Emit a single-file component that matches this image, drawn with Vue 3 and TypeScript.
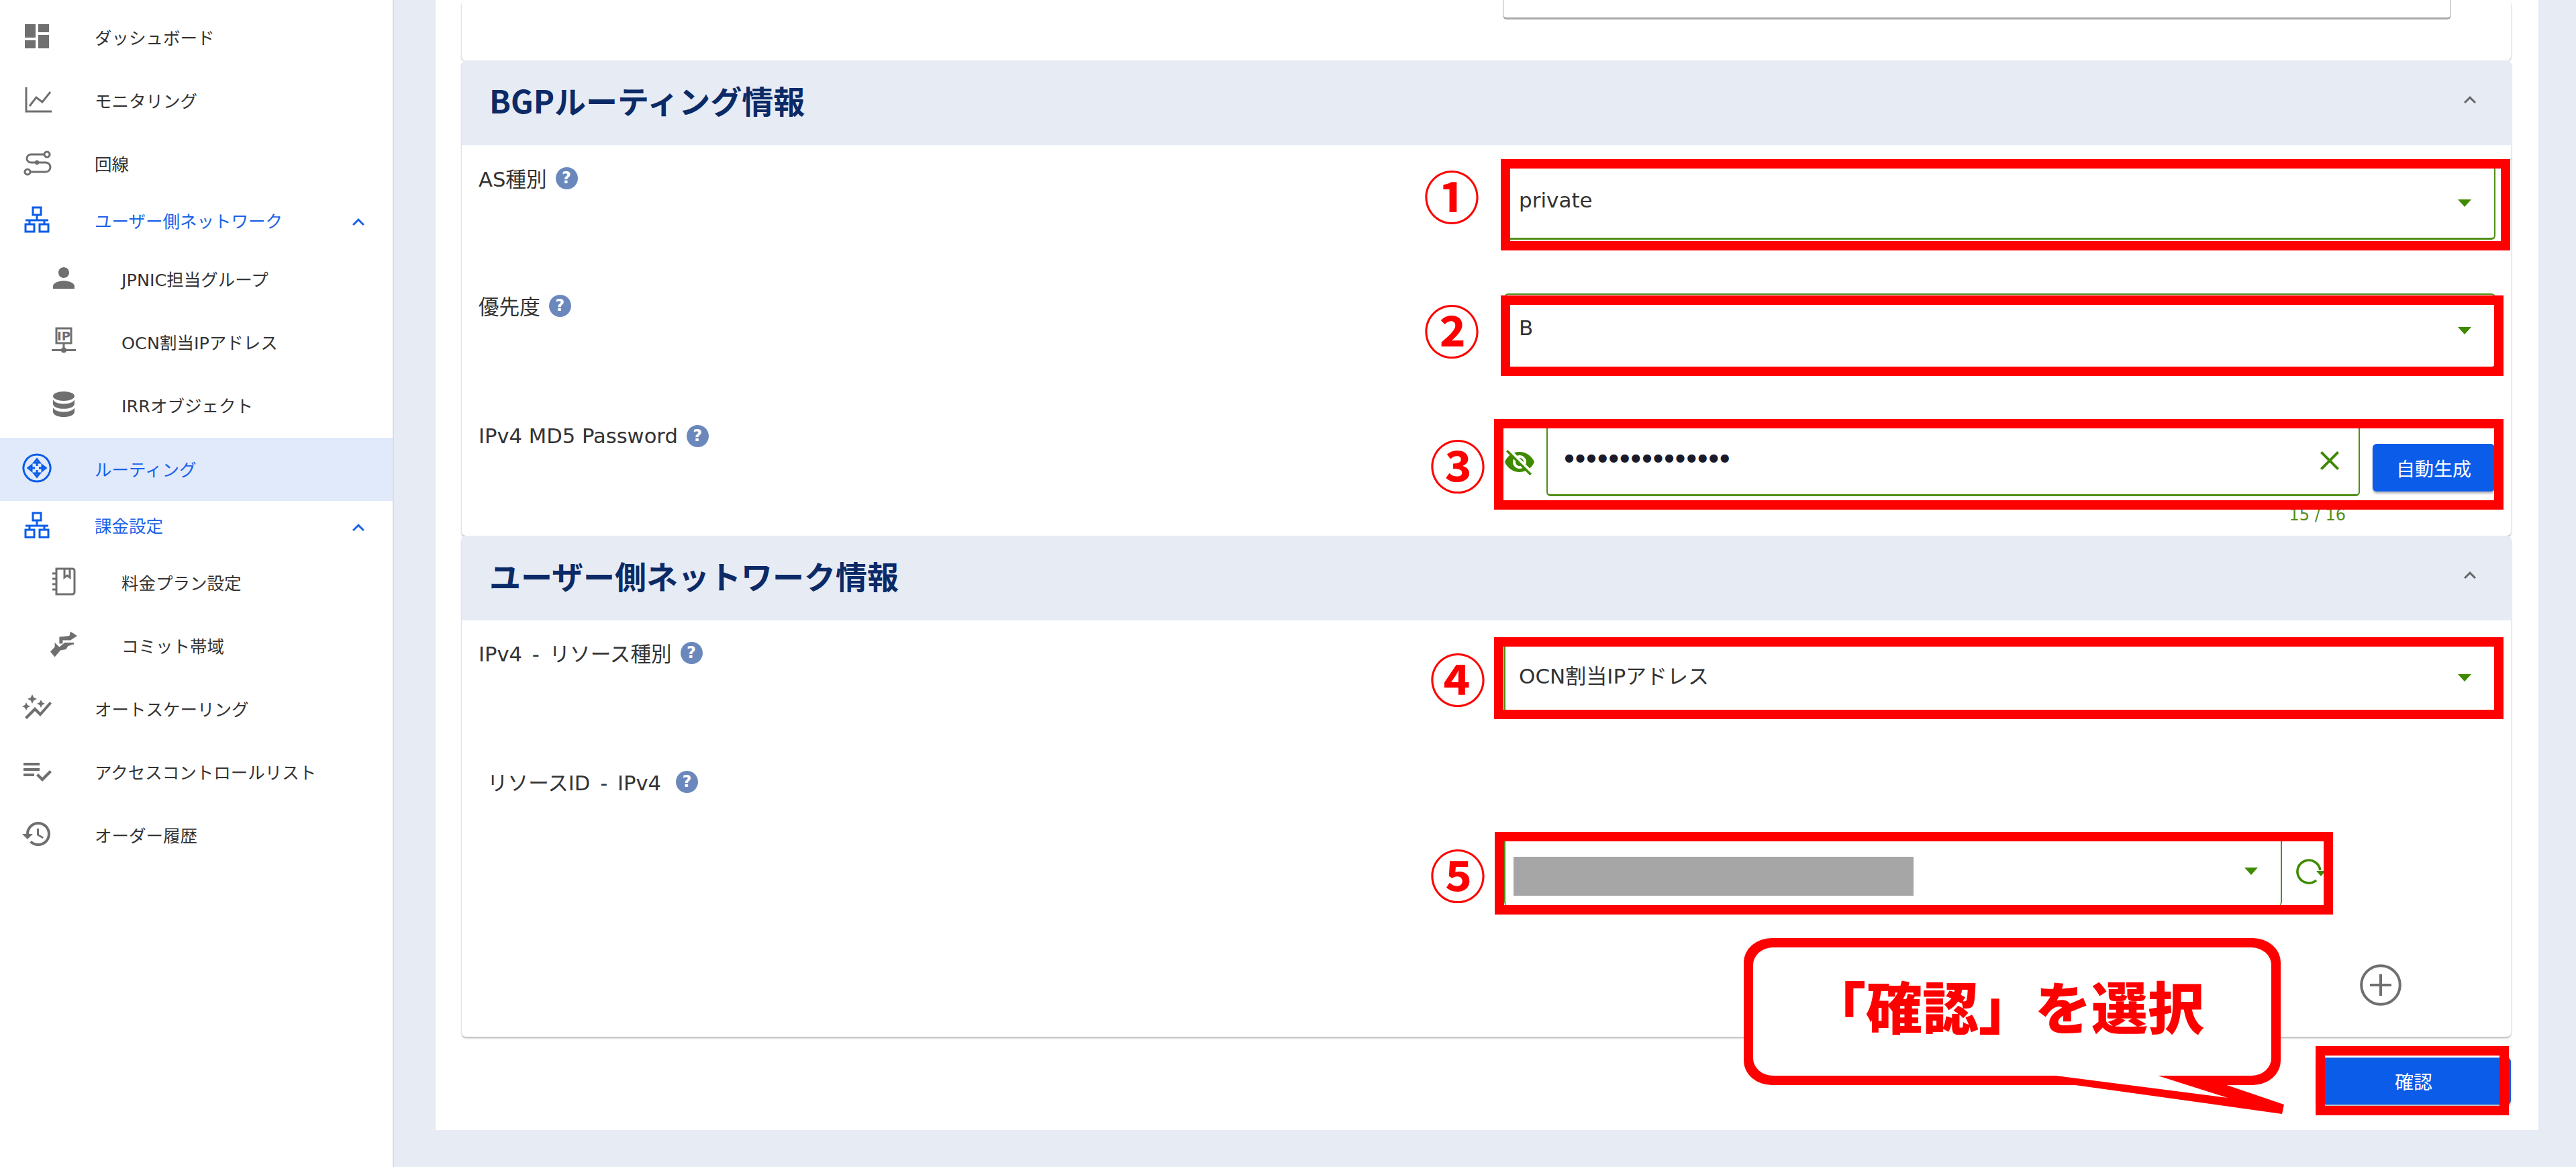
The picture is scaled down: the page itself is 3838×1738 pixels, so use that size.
<script setup lang="ts">
interface NavItem {
  label: string
  icon: string
  sub?: boolean
  group?: boolean
  active?: boolean
  blue?: boolean
}

const icons: Record<string, { d: string; line?: boolean }> = {
  dashboard: { d: 'M3 13h8V3H3v10zm0 8h8v-6H3v6zm10 0h8V11h-8v10zm0-18v6h8V3h-8z' },
  chart: { d: 'M4 3v18h19M6.500 17l5-6.500 4.500 3.500 6-7.500', line: true },
  route: {
    d: 'M17.500 6H7.500a3 3 0 0 0 0 6H18.500a3.500 3.500 0 0 1 0 7H7.200M19.500 4a2 2 0 1 0 .01 0zM5 17a2 2 0 1 0 .01 0zM12 11a1 1 0 1 0 .01 0z',
    line: true
  },
  network: {
    d: 'M9 3h6v5.500H9zM3.500 15.500h6.500V21H3.500zM14 15.500h6.500V21H14zM12 8.500v4M3.500 12.500h17M6.500 12.500v3M17.500 12.500v3',
    line: true
  },
  person: { d: 'M12 12c2.210 0 4-1.790 4-4s-1.790-4-4-4-4 1.790-4 4 1.790 4 4 4zm0 2c-2.670 0-8 1.340-8 4v2h16v-2c0-2.660-5.330-4-8-4z' },
  router: {
    d: 'M12 2a10 10 0 1 0 .01 0zM12 5.500l-2 2.500h4zM12 8v2.500M12 18.500l-2-2.500h4zM12 16v-2.500M5.500 12l2.500-2v4zM8 12h2.500M18.500 12l-2.500-2v4zM16 12h-2.500',
    line: true
  },
  notebook: {
    d: 'M6.500 2.500h12a1.500 1.500 0 0 1 1.500 1.500v16a1.500 1.500 0 0 1-1.500 1.500h-12zM3.500 6H6M3.500 10H6M3.500 14H6M3.500 18H6M12.500 3v6l2-1.500 2 1.500V3',
    line: true
  },
  commit: {
    d: 'M8.700 11.300V6.300l7.500-.8.800-3.300 5 3.300-5 3.300h-5.800v2.500zM2 17.200l3.300-3.400v-3.300l3.400 3.300 4.100-3.300h6.700v1.300l-4.200 1.200-1.600 2.500-4.200.8-4.200 5z'
  },
  autograph: {
    d: 'M14.060 9.940L12 9l2.060-.940L15 6l.940 2.060L18 9l-2.060.940L15 12l-.940-2.060zM4 14l.940-2.060L7 11l-2.060-.940L4 8l-.940 2.060L1 11l2.060.940L4 14zm4.500-5l1.090-2.410L12 5.500 9.590 4.410 8.500 2 7.410 4.410 5 5.500l2.410 1.090L8.500 9zm-4 11.500l6-6.010 4 4L23 8.930l-1.410-1.410-7.090 7.970-4-4L3 19l1.500 1.500z'
  },
  checklist: { d: 'M14 10H2v2h12v-2zm0-4H2v2h12V6zM2 16h8v-2H2v2zm19.500-4.500L23 13l-6.990 7-4.510-4.500L13 14l3.010 3 5.490-5.500z' },
  history: {
    d: 'M13 3c-4.970 0-9 4.030-9 9H1l3.890 3.890.070.140L9 12H6c0-3.870 3.130-7 7-7s7 3.130 7 7-3.130 7-7 7c-1.930 0-3.680-.790-4.940-2.060l-1.420 1.420C8.270 19.990 10.510 21 13 21c4.970 0 9-4.030 9-9s-4.030-9-9-9zm-1 5v5l4.280 2.540.720-1.210-3.500-2.080V8H12z'
  }
}

const navItems: NavItem[] = [
  { label: 'ダッシュボード', icon: 'dashboard' },
  { label: 'モニタリング', icon: 'chart' },
  { label: '回線', icon: 'route' },
  { label: 'ユーザー側ネットワーク', icon: 'network', group: true, blue: true },
  { label: 'JPNIC担当グループ', icon: 'person', sub: true },
  { label: 'OCN割当IPアドレス', icon: 'ip', sub: true },
  { label: 'IRRオブジェクト', icon: 'database', sub: true },
  { label: 'ルーティング', icon: 'router', active: true, blue: true },
  { label: '課金設定', icon: 'network', group: true, blue: true },
  { label: '料金プラン設定', icon: 'notebook', sub: true },
  { label: 'コミット帯域', icon: 'commit', sub: true },
  { label: 'オートスケーリング', icon: 'autograph' },
  { label: 'アクセスコントロールリスト', icon: 'checklist' },
  { label: 'オーダー履歴', icon: 'history' }
]

const chevron = 'M7.410 15.410L12 10.830l4.590 4.580L18 14l-6-6-6 6z'
const markers = ['①', '②', '③', '④', '⑤']
</script>

<template>
  <div class="page">
    <aside class="sidebar">
      <div
        v-for="item in navItems"
        :key="item.label"
        class="nav-item"
        :class="{ sub: item.sub, group: item.group, active: item.active, blue: item.blue }"
      >
        <svg v-if="item.icon === 'ip'" class="nav-icon" viewBox="0 0 24 24">
          <path d="M6.500 2.500h11v11h-11z" fill="none" stroke="currentColor" stroke-width="1.500" />
          <text x="12" y="11.500" text-anchor="middle" class="ip-text">IP</text>
          <path d="M12 13.500v4M3 18.800h18" fill="none" stroke="currentColor" stroke-width="1.500" />
          <circle cx="12" cy="18.800" r="2" fill="currentColor" />
        </svg>
        <svg v-else-if="item.icon === 'database'" class="nav-icon" viewBox="0 0 24 24">
          <ellipse cx="12" cy="6" rx="8" ry="3.500" fill="currentColor" />
          <path d="M4 8.500c1 2.200 4 3.200 8 3.200s7-1 8-3.200v3.500c-.5 2.300-4 3.400-8 3.400s-7.500-1.100-8-3.400z" fill="currentColor" />
          <path d="M4 14.500c1 2.200 4 3.200 8 3.200s7-1 8-3.200V18c-.5 2.300-4 3.500-8 3.500S4.500 20.300 4 18z" fill="currentColor" />
        </svg>
        <svg v-else class="nav-icon" viewBox="0 0 24 24">
          <path
            :d="icons[item.icon].d"
            :fill="icons[item.icon].line ? 'none' : 'currentColor'"
            :stroke="icons[item.icon].line ? 'currentColor' : 'none'"
            stroke-width="1.500"
          />
        </svg>
        <span class="nav-label">{{ item.label }}</span>
        <svg v-if="item.group" class="nav-chevron" viewBox="0 0 24 24"><path :d="chevron" fill="currentColor" /></svg>
      </div>
    </aside>

    <main class="main">
      <div class="panel">
        <section class="card card-top">
          <div class="top-input"></div>
        </section>

        <section class="card">
          <header class="card-header">
            <h2>BGPルーティング情報</h2>
            <svg class="header-chevron" viewBox="0 0 24 24"><path :d="chevron" fill="currentColor" /></svg>
          </header>
          <div class="card-body">
            <div class="form-row row-as">
              <div class="label">AS種別<span class="help">?</span></div>
              <div class="field">
                <span>private</span><i class="caret"></i>
              </div>
            </div>
            <div class="form-row row-priority">
              <div class="label">優先度<span class="help">?</span></div>
              <div class="field">
                <span>B</span><i class="caret"></i>
              </div>
            </div>
            <div class="form-row row-password">
              <div class="label">IPv4 MD5 Password<span class="help">?</span></div>
              <div class="password-col">
                <div class="password-line">
                  <svg class="eye" viewBox="0 0 24 24">
                    <path d="M12 7c2.760 0 5 2.240 5 5 0 .650-.130 1.260-.360 1.830l2.920 2.920c1.510-1.260 2.700-2.890 3.430-4.750-1.730-4.390-6-7.500-11-7.500-1.400 0-2.740.250-3.980.700l2.160 2.160C10.740 7.130 11.350 7 12 7zM2 4.270l2.280 2.280.460.460C3.080 8.300 1.780 10.020 1 12c1.730 4.390 6 7.500 11 7.500 1.550 0 3.030-.300 4.380-.840l.420.420L19.730 22 21 20.730 3.270 3 2 4.270zM7.530 9.800l1.550 1.550c-.050.210-.080.430-.080.650 0 1.660 1.340 3 3 3 .220 0 .440-.030.650-.080l1.550 1.550c-.670.330-1.410.530-2.200.530-2.760 0-5-2.240-5-5 0-.790.200-1.530.530-2.200zm4.310-.780l3.150 3.150.020-.160c0-1.660-1.340-3-3-3l-.170.010z" fill="currentColor" />
                  </svg>
                  <div class="field password-field">
                    <span class="dots">●●●●●●●●●●●●●●●</span>
                    <svg class="clear" viewBox="0 0 24 24">
                      <path d="M19 6.410L17.590 5 12 10.590 6.410 5 5 6.410 10.590 12 5 17.590 6.410 19 12 13.410 17.590 19 19 17.590 13.410 12z" fill="currentColor" />
                    </svg>
                  </div>
                  <button class="btn btn-generate">自動生成</button>
                </div>
                <div class="counter">15 / 16</div>
              </div>
            </div>
          </div>
        </section>

        <section class="card card-user">
          <header class="card-header">
            <h2>ユーザー側ネットワーク情報</h2>
            <svg class="header-chevron" viewBox="0 0 24 24"><path :d="chevron" fill="currentColor" /></svg>
          </header>
          <div class="card-body">
            <div class="form-row row-resource">
              <div class="label label-spaced">IPv4 - リソース種別<span class="help">?</span></div>
              <div class="field">
                <span>OCN割当IPアドレス</span><i class="caret"></i>
              </div>
            </div>
            <div class="form-row row-id">
              <div class="label label-indent label-spaced">リソースID - IPv4<span class="help help-wide">?</span></div>
              <div class="id-col">
                <div class="id-line">
                  <div class="field id-field">
                    <span class="masked"></span><i class="caret"></i>
                  </div>
                  <svg class="refresh" viewBox="0 0 24 24">
                    <path d="M17.500 18.500A8.500 8.500 0 1 1 20.400 11" fill="none" stroke="currentColor" stroke-width="1.800" />
                    <polygon points="17.500,11.500 24.500,11.500 21,15.500" fill="currentColor" />
                  </svg>
                </div>
                <svg class="add" viewBox="0 0 24 24">
                  <circle cx="12" cy="12" r="10.800" fill="none" stroke="currentColor" stroke-width="1.500" />
                  <path d="M12 6v12M6 12h12" stroke="currentColor" stroke-width="1.500" />
                </svg>
              </div>
            </div>
          </div>
        </section>

        <footer class="panel-footer">
          <button class="btn btn-confirm">確認</button>
        </footer>
      </div>
    </main>

    <!-- annotations drawn over the screenshot -->
    <div class="mark mark-1"></div>
    <div class="mark mark-2"></div>
    <div class="mark mark-3"></div>
    <div class="mark mark-4"></div>
    <div class="mark mark-5"></div>
    <div class="mark mark-6"></div>
    <span v-for="(m, i) in markers" :key="m" class="num" :class="'num-' + (i + 1)">{{ m }}</span>

    <div class="callout">
      <svg class="callout-shape" viewBox="0 0 810 270">
        <rect x="0" y="0" width="800" height="219" rx="42" ry="36" fill="#ff0000" />
        <polygon points="465,215 802,262 805,248 708,215" fill="#ff0000" />
        <rect x="14" y="14" width="772" height="191" rx="30" ry="26" fill="#ffffff" />
        <polygon points="465,205 721,238 617,205" fill="#ffffff" />
      </svg>
      <span class="callout-text">「確認」を選択</span>
    </div>
  </div>
</template>

<style scoped>
.page {
  position: relative;
  display: flex;
  width: 3838px;
  height: 1738px;
  overflow: hidden;
  background: #e6ebf4;
  font-family: "DejaVu Sans", "Noto Sans CJK JP", sans-serif;
  color: #333;
}

.sidebar {
  flex: none;
  width: 585px;
  padding-top: 7px;
  box-sizing: content-box;
  background: #fff;
  border-right: 2px solid #dcdcdc;
}

.nav-item {
  display: flex;
  align-items: center;
  height: 94px;
  padding: 0 33px 0 31px;
  font-size: 25.500px;
  color: #333;
}

.nav-item.sub {
  padding-left: 71px;
}

.nav-item.group {
  height: 78px;
  padding-bottom: 2px;
  box-sizing: border-box;
}

.nav-item.active {
  margin-top: 3px;
  background: #e1eafb;
  padding-bottom: 4px;
  box-sizing: border-box;
}

.nav-item.active + .nav-item.group {
  height: 75px;
  margin-top: -2px;
  padding-bottom: 0;
}

.nav-item.blue {
  color: #1a62e8;
}

.nav-icon {
  flex: none;
  width: 48px;
  height: 48px;
  margin-right: 62px;
  color: #6f6f6f;
}

.nav-item.blue .nav-icon {
  color: #0b5ce8;
}

.nav-label {
  white-space: nowrap;
}

.nav-chevron {
  flex: none;
  width: 36px;
  height: 36px;
  margin-left: auto;
  margin-top: 8px;
}

.ip-text {
  font-family: "DejaVu Sans", sans-serif;
  font-size: 9px;
  font-weight: 700;
  fill: currentColor;
}

.main {
  flex: 1;
  padding: 0 56px 55px 62px;
  min-width: 0;
}

.panel {
  height: 100%;
  padding: 0 41px 0 39px;
  background: #fff;
  box-sizing: border-box;
}

.card {
  background: #fff;
  border-radius: 6px;
  box-shadow: 0 2px 3px rgba(0, 0, 0, 0.3);
}

.card-top {
  height: 90px;
  clip-path: inset(0 -6px 0 -6px);
}

.top-input {
  width: 1413px;
  height: 29px;
  margin-left: 1551px;
  box-sizing: border-box;
  border: 1px solid #aaa;
  border-top: none;
  border-bottom: 3px solid #a8a8a8;
  border-radius: 0 0 6px 6px;
}

.card-header {
  display: flex;
  align-items: center;
  justify-content: space-between;
  height: 126px;
  padding: 0 43px 8px 41px;
  box-sizing: border-box;
  background: #e6ebf4;
  border-radius: 6px 6px 0 0;
}

.card-header h2 {
  margin: 0;
  font-family: "Noto Sans CJK JP", sans-serif;
  font-size: 47px;
  font-weight: 700;
  line-height: 60px;
  color: #0b2a66;
}

.header-chevron {
  width: 36px;
  height: 36px;
  color: #666;
}

.card-body {
  padding: 31px 23px 0 25px;
}

.card-user .card-body {
  padding-top: 30px;
  padding-bottom: 45px;
}

.form-row {
  display: grid;
  grid-template-columns: 1528px 1477px;
}

.row-as {
  height: 190px;
}

.row-as .field {
  height: 110px;
  padding-bottom: 8px;
}

.row-priority {
  height: 194px;
}

.row-priority .field {
  height: 112px;
  padding-bottom: 10px;
}

.row-password {
  height: 167px;
}

.row-resource {
  height: 192px;
}

.label {
  display: flex;
  align-items: center;
  height: 36px;
  font-size: 30.600px;
  color: #333;
  white-space: nowrap;
}

.label-spaced {
  word-spacing: 5px;
}

.label-indent {
  padding-left: 13px;
}

.help {
  display: flex;
  align-items: center;
  justify-content: center;
  width: 33px;
  height: 33px;
  margin-left: 13px;
  border-radius: 50%;
  background: #6b88bd;
  color: #fff;
  font-size: 24px;
  font-weight: 700;
}

.help-wide {
  margin-left: 22px;
}

.field {
  display: flex;
  align-items: center;
  justify-content: space-between;
  height: 108px;
  padding: 0 34px 6px 20px;
  box-sizing: border-box;
  background: #fff;
  border: 2px solid #4f8f17;
  border-bottom-width: 3px;
  border-radius: 6px;
  font-size: 31px;
  color: #333;
}

.caret {
  flex: none;
  width: 0;
  height: 0;
  margin-top: 10px;
  border-left: 10px solid transparent;
  border-right: 10px solid transparent;
  border-top: 11px solid #3f8a00;
}

.password-line {
  display: flex;
  align-items: flex-start;
}

.eye {
  flex: none;
  width: 48px;
  height: 48px;
  margin: 33px 16px 0 -1px;
  color: #3f8a00;
}

.password-field {
  flex: none;
  width: 1212px;
  padding-left: 25px;
  padding-right: 19px;
}

.dots {
  font-size: 16px;
  letter-spacing: 2.600px;
  color: #1a1a2a;
}

.clear {
  width: 48px;
  height: 48px;
  margin-top: 8px;
  color: #3f8a00;
}

.btn {
  border: none;
  border-radius: 6px;
  background: #0b5ce8;
  color: #fff;
  font-family: "Noto Sans CJK JP", sans-serif;
  font-size: 28px;
  box-shadow: 0 3px 3px rgba(0, 0, 0, 0.28);
  padding: 0;
}

.btn-generate {
  flex: none;
  width: 182px;
  height: 71px;
  margin: 30px 0 0 19px;
}

.counter {
  width: 1254px;
  margin-top: 13px;
  font-size: 24px;
  line-height: 30px;
  text-align: right;
  color: #4f8f17;
}

.id-col {
  display: flex;
  flex-direction: column;
}

.id-line {
  display: flex;
  align-items: center;
  margin-top: 95px;
}

.id-field {
  flex: none;
  width: 1159px;
  border-top: none;
  border-bottom: none;
  padding-left: 12px;
  padding-right: 34px;
}

.masked {
  display: block;
  width: 596px;
  height: 58px;
  margin-top: 26px;
  background: #a6a6a6;
}

.refresh {
  width: 48px;
  height: 48px;
  margin-left: 16px;
  margin-top: 6px;
  overflow: visible;
  color: #3f8a00;
}

.add {
  align-self: flex-end;
  width: 64px;
  height: 64px;
  margin: 86px 139px 0 0;
  color: #6f6f6f;
}

.panel-footer {
  display: flex;
  justify-content: flex-end;
  margin-top: 31px;
}

.btn-confirm {
  width: 290px;
  height: 70px;
}

.mark {
  position: absolute;
  box-sizing: border-box;
  border: 14px solid #ff0000;
}

.mark-1 { left: 2236px; top: 237px; width: 1504px; height: 136px; }
.mark-2 { left: 2236px; top: 440px; width: 1494px; height: 120px; }
.mark-3 { left: 2226px; top: 624px; width: 1504px; height: 135px; }
.mark-4 { left: 2226px; top: 949px; width: 1504px; height: 122px; }
.mark-5 { left: 2227px; top: 1239px; width: 1249px; height: 123px; }
.mark-6 { left: 3450px; top: 1558px; width: 288px; height: 103px; }

.num {
  position: absolute;
  width: 100px;
  height: 100px;
  font-family: "Noto Sans CJK JP", sans-serif;
  font-size: 84px;
  font-weight: 700;
  line-height: 100px;
  text-align: center;
  color: #ff0000;
}

.num-1 { left: 2113px; top: 240px; }
.num-2 { left: 2113px; top: 440px; }
.num-3 { left: 2122px; top: 641px; }
.num-4 { left: 2122px; top: 959px; }
.num-5 { left: 2122px; top: 1251px; }

.callout {
  position: absolute;
  left: 2598px;
  top: 1397px;
  display: flex;
  justify-content: center;
  width: 810px;
  height: 270px;
}

.callout-shape {
  position: absolute;
  inset: 0;
  width: 810px;
  height: 270px;
}

.callout-text {
  position: relative;
  margin-top: 42px;
  margin-left: -26px;
  font-family: "Noto Sans CJK JP", sans-serif;
  font-size: 84px;
  font-weight: 900;
  line-height: 116px;
  color: #ff0000;
  white-space: nowrap;
}
</style>
